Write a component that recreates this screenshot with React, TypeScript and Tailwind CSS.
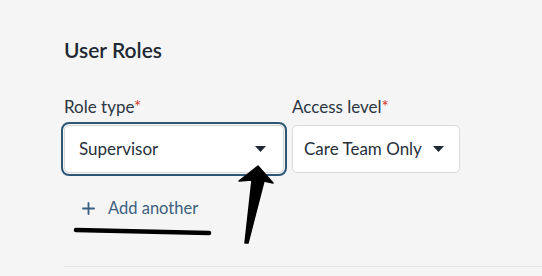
import { Plus } from "lucide-react";

function Caret() {
  return (
    <svg width="11" height="6" viewBox="0 0 11 6" className="shrink-0">
      <path d="M0 0 L11 0 L5.5 6 Z" fill="#1f2933" />
    </svg>
  );
}

function Label({ text }: { text: string }) {
  return (
    <div className="text-[17px] leading-5 text-[#2b3440] mb-[8px]">
      {text}
      <span className="text-[#d9342b]">*</span>
    </div>
  );
}

export default function App() {
  return (
    <div
      className="relative w-[542px] h-[276px] overflow-hidden bg-[#f5f5f5]"
      style={{ fontFamily: "Lato, 'Noto Sans', sans-serif" }}
    >
      <div className="pl-[64px] pt-[36px]">
        <h2 className="text-[21px] leading-7 font-semibold text-[#1e2833]">
          User Roles
        </h2>

        <div className="flex items-start gap-[8px] mt-[33px]">
          <div>
            <Label text="Role type" />
            <div className="w-[220px] h-[48px] bg-white border border-[#d6d6d6] rounded-[5px] outline-2 outline-offset-1 outline-[#2e5775] flex items-center justify-between pl-[14px] pr-[17px]">
              <span className="text-[17px] text-[#27303a]">Supervisor</span>
              <Caret />
            </div>
          </div>
          <div>
            <Label text="Access level" />
            <div className="w-[168px] h-[48px] bg-white border border-[#dadada] rounded-[5px] flex items-center justify-between pl-[11px] pr-[15px]">
              <span className="text-[17px] text-[#27303a]">Care Team Only</span>
              <Caret />
            </div>
          </div>
        </div>

        <button className="flex items-center gap-[10px] mt-[23px] ml-[15px] text-[16.5px] text-[#3c607e]">
          <Plus size={19} strokeWidth={2.3} />
          <span>Add another</span>
        </button>

        <div className="mt-[45px] border-t border-[#e4e4e4]" />
      </div>

      {/* annotations */}
      <svg
        className="absolute left-0 top-0 pointer-events-none"
        width="542"
        height="276"
        viewBox="0 0 542 276"
      >
        <defs>
          <filter id="blur" x="-20%" y="-20%" width="140%" height="140%">
            <feGaussianBlur stdDeviation="0.6" />
          </filter>
        </defs>
        <g filter="url(#blur)">
          <path
            d="M76 230 L209 233"
            stroke="#000"
            strokeWidth="4.5"
            strokeLinecap="round"
          />
          <path
            d="M258 166 L273 183 L264 181 L248 243 L245 243 L252 180 L239 181 Z"
            fill="#000"
            stroke="#000"
            strokeWidth="1.5"
            strokeLinejoin="round"
          />
        </g>
      </svg>
    </div>
  );
}
